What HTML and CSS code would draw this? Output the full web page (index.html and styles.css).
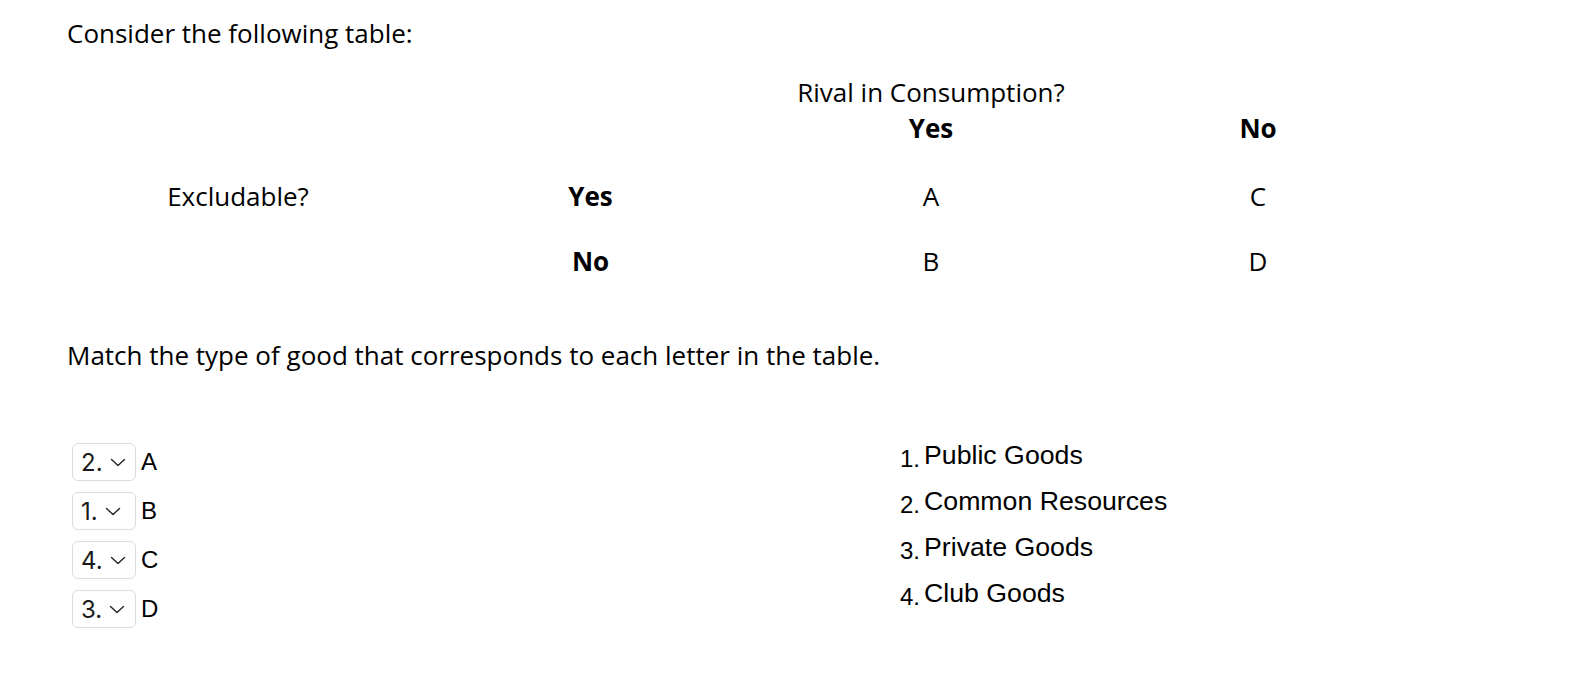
FILE: index.html
```html
<!DOCTYPE html>
<html>
<head>
<meta charset="utf-8">
<link rel="stylesheet" href="styles.css">
</head>
<body>
<div class="page">
  <p class="intro">Consider the following table:</p>
  <table class="goods">
    <colgroup>
      <col class="c1"><col class="c2"><col class="c3"><col class="c4">
    </colgroup>
    <tr class="r1"><td></td><td></td><td>Rival in Consumption?</td><td></td></tr>
    <tr class="r2"><td></td><td></td><td class="b">Yes</td><td class="b">No</td></tr>
    <tr class="r3"><td>Excludable?</td><td class="b">Yes</td><td>A</td><td>C</td></tr>
    <tr class="r4"><td></td><td class="b">No</td><td>B</td><td>D</td></tr>
  </table>
  <p class="prompt">Match the type of good that corresponds to each letter in the table.</p>
  <div class="match">
    <div class="selects">
      <div class="row"><div class="sel"><span class="val">2.</span><svg class="chev" viewBox="0 0 16 9" width="16" height="9"><path d="M1.5 1.5 L8 7.5 L14.5 1.5" fill="none" stroke="#222" stroke-width="1.4" stroke-linecap="round" stroke-linejoin="round"/></svg></div><span class="lab">A</span></div>
      <div class="row"><div class="sel"><span class="val">1.</span><svg class="chev" viewBox="0 0 16 9" width="16" height="9"><path d="M1.5 1.5 L8 7.5 L14.5 1.5" fill="none" stroke="#222" stroke-width="1.4" stroke-linecap="round" stroke-linejoin="round"/></svg></div><span class="lab">B</span></div>
      <div class="row"><div class="sel"><span class="val">4.</span><svg class="chev" viewBox="0 0 16 9" width="16" height="9"><path d="M1.5 1.5 L8 7.5 L14.5 1.5" fill="none" stroke="#222" stroke-width="1.4" stroke-linecap="round" stroke-linejoin="round"/></svg></div><span class="lab">C</span></div>
      <div class="row"><div class="sel"><span class="val">3.</span><svg class="chev" viewBox="0 0 16 9" width="16" height="9"><path d="M1.5 1.5 L8 7.5 L14.5 1.5" fill="none" stroke="#222" stroke-width="1.4" stroke-linecap="round" stroke-linejoin="round"/></svg></div><span class="lab">D</span></div>
    </div>
    <ol class="options">
      <li><span class="num">1.</span>Public Goods</li>
      <li><span class="num">2.</span>Common Resources</li>
      <li><span class="num">3.</span>Private Goods</li>
      <li><span class="num">4.</span>Club Goods</li>
    </ol>
  </div>
</div>
</body>
</html>
```

FILE: styles.css
```css
html, body {
  margin: 0;
  padding: 0;
  background: #fff;
}
body {
  font-family: "Open Sans", sans-serif;
  color: #000;
  font-size: 26px;
}
.page {
  padding: 15px 0 0 67px;
}
.intro {
  margin: 0;
  line-height: 36px;
}
.goods {
  border-collapse: collapse;
  margin-top: 23px;
  line-height: 36px;
}
.goods td {
  padding: 0;
  text-align: center;
  vertical-align: top;
}
.goods .b {
  font-weight: 700;
}
.c1 { width: 342px; }
.c2 { width: 363px; }
.c3 { width: 318px; }
.c4 { width: 336px; }
.r3 td { padding: 32px 0 11px; }
.r4 td { padding: 18px 0 0; }
.prompt {
  margin: 58px 0 0;
  line-height: 36px;
}
.match {
  display: flex;
  margin-top: 70px;
}
.selects {
  display: flex;
  flex-direction: column;
  gap: 11px;
  width: 828px;
  padding-left: 5px;
}
.row {
  display: flex;
  align-items: center;
  gap: 5px;
  height: 38px;
}
.sel {
  box-sizing: border-box;
  width: 64px;
  height: 38px;
  border: 1px solid #dcdcdc;
  border-radius: 6px;
  display: flex;
  align-items: center;
  padding-left: 8px;
  gap: 7px;
  font-family: "Inter", "Liberation Sans", sans-serif;
  font-size: 24px;
  color: #1a1a1a;
}
.chev {
  display: block;
  margin-top: 1px;
}
.lab {
  font-family: "Liberation Sans", Arial, sans-serif;
  font-size: 24px;
}
.options {
  list-style: none;
  margin: -3px 0 0;
  padding: 0;
  font-family: "Liberation Sans", Arial, sans-serif;
  font-size: 26.7px;
  display: flex;
  flex-direction: column;
  gap: 15px;
}
.options li {
  line-height: 30px;
}
.num {
  display: inline-block;
  font-size: 24px;
  position: relative;
  top: 3px;
  margin-right: 4px;
}
```
